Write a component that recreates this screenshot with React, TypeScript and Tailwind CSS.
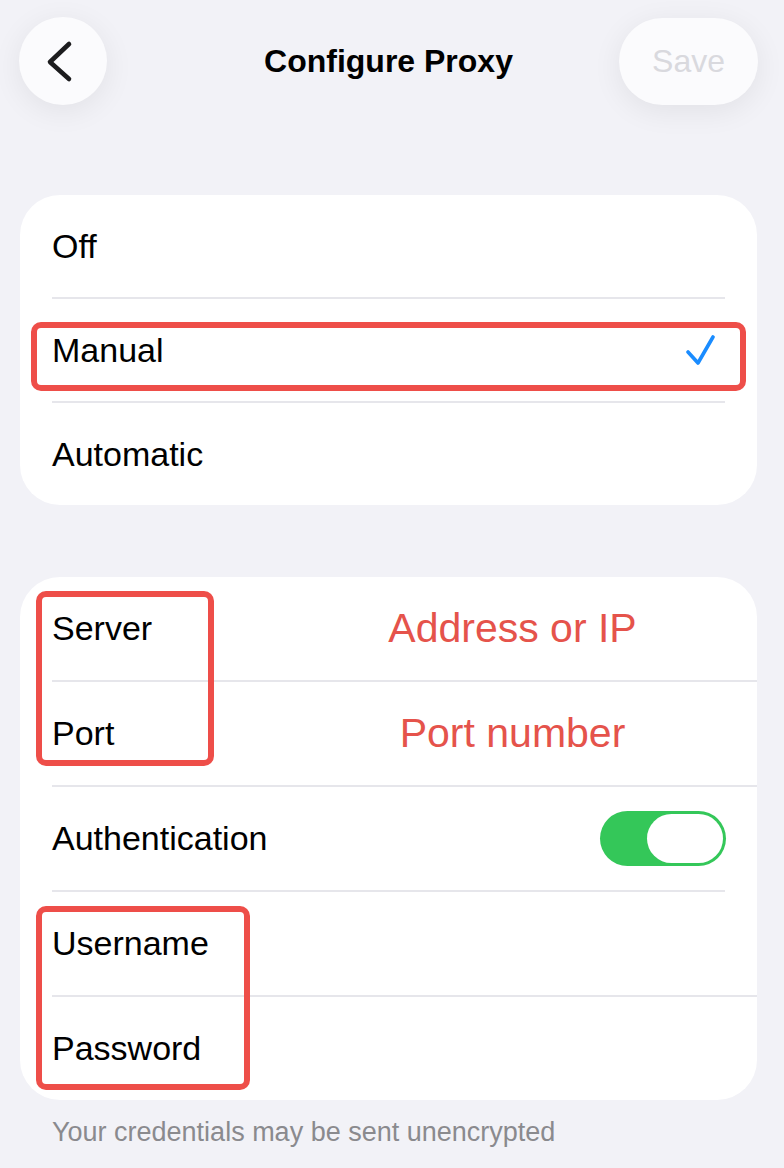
import React from "react";

function Separator({ full }: { full?: boolean }) {
  return <div className={full ? "h-[2px] bg-[#e6e6eb] ml-[32px]" : "h-[2px] bg-[#e6e6eb] mx-[32px]"} />;
}

function Row({ children, h = "h-[103px]" }: { children: React.ReactNode; h?: string }) {
  return <div className={`${h} flex items-center pl-[32px] pr-[32px] text-[34px] text-black`}>{children}</div>;
}

function Check() {
  return (
    <svg width="32" height="32" viewBox="0 0 32 32" fill="none">
      <path d="M2 18 L12 29 L27 3" stroke="#1a8cff" strokeWidth="3.6" strokeLinecap="round" strokeLinejoin="round" />
    </svg>
  );
}

function Toggle() {
  return (
    <div className="w-[126px] h-[55px] rounded-full bg-[#34c759] p-[3px] flex justify-end">
      <div className="w-[76px] h-[49px] rounded-full bg-white" />
    </div>
  );
}

export default function App() {
  return (
    <div className="w-[784px] min-h-[1168px] bg-[#f2f2f7] font-['Liberation_Sans',Arial,sans-serif] pb-[20px]">
      {/* header */}
      <div className="grid grid-cols-[1fr_auto_1fr] items-center pl-[19px] pr-[26px] pt-[17px]">
        <div className="flex justify-start">
          <button className="w-[88px] h-[88px] rounded-full bg-[#fbfbfd] shadow-[0_6px_30px_rgba(0,0,0,0.07)] flex items-center justify-center">
            <svg width="88" height="88" viewBox="0 0 88 88" fill="none">
              <path d="M50 27 L31 45 L50 62" stroke="#1c1c1e" strokeWidth="4.6" strokeLinecap="round" strokeLinejoin="round" />
            </svg>
          </button>
        </div>
        <h1 className="text-[32px] font-bold text-black leading-none">Configure Proxy</h1>
        <div className="flex justify-end">
          <button className="w-[139px] h-[87px] rounded-full bg-[#fbfbfd] shadow-[0_6px_30px_rgba(0,0,0,0.07)] text-[32px] text-[#d9d9de]">
            Save
          </button>
        </div>
      </div>

      {/* mode card */}
      <div className="ml-[20px] mr-[27px] mt-[90px] rounded-[40px] bg-white">
        <Row h="h-[102px]">Off</Row>
        <Separator />
        <div className="relative h-[102px] flex items-center justify-between pl-[32px] pr-[39px] text-[34px] text-black">
          <span>Manual</span>
          <Check />
          <div className="absolute left-[11px] top-[23px] w-[715px] h-[69px] border-[6px] border-[#ee4e49] rounded-[10px]" />
        </div>
        <Separator />
        <Row h="h-[102px]">Automatic</Row>
      </div>

      {/* settings card */}
      <div className="relative ml-[20px] mr-[27px] mt-[72px] rounded-[40px] bg-white">
        <Row>
          <span className="w-[248px] shrink-0">Server</span>
          <span className="flex-1 text-center text-[41px] text-[#e5534b]">Address or IP</span>
        </Row>
        <Separator full />
        <Row>
          <span className="w-[248px] shrink-0">Port</span>
          <span className="flex-1 text-center text-[41px] text-[#e5534b]">Port number</span>
        </Row>
        <Separator full />
        <div className="h-[103px] flex items-center justify-between pl-[32px] pr-[31px] text-[34px] text-black">
          <span>Authentication</span>
          <Toggle />
        </div>
        <Separator />
        <Row>Username</Row>
        <Separator full />
        <Row>Password</Row>

        <div className="absolute left-[16px] top-[14px] w-[178px] h-[175px] border-[6px] border-[#ee4e49] rounded-[10px]" />
        <div className="absolute left-[16px] top-[329px] w-[214px] h-[184px] border-[6px] border-[#ee4e49] rounded-[10px]" />
      </div>

      <p className="pl-[52px] mt-[19px] text-[27px] text-[#8a8a8e] leading-none">Your credentials may be sent unencrypted</p>
    </div>
  );
}
